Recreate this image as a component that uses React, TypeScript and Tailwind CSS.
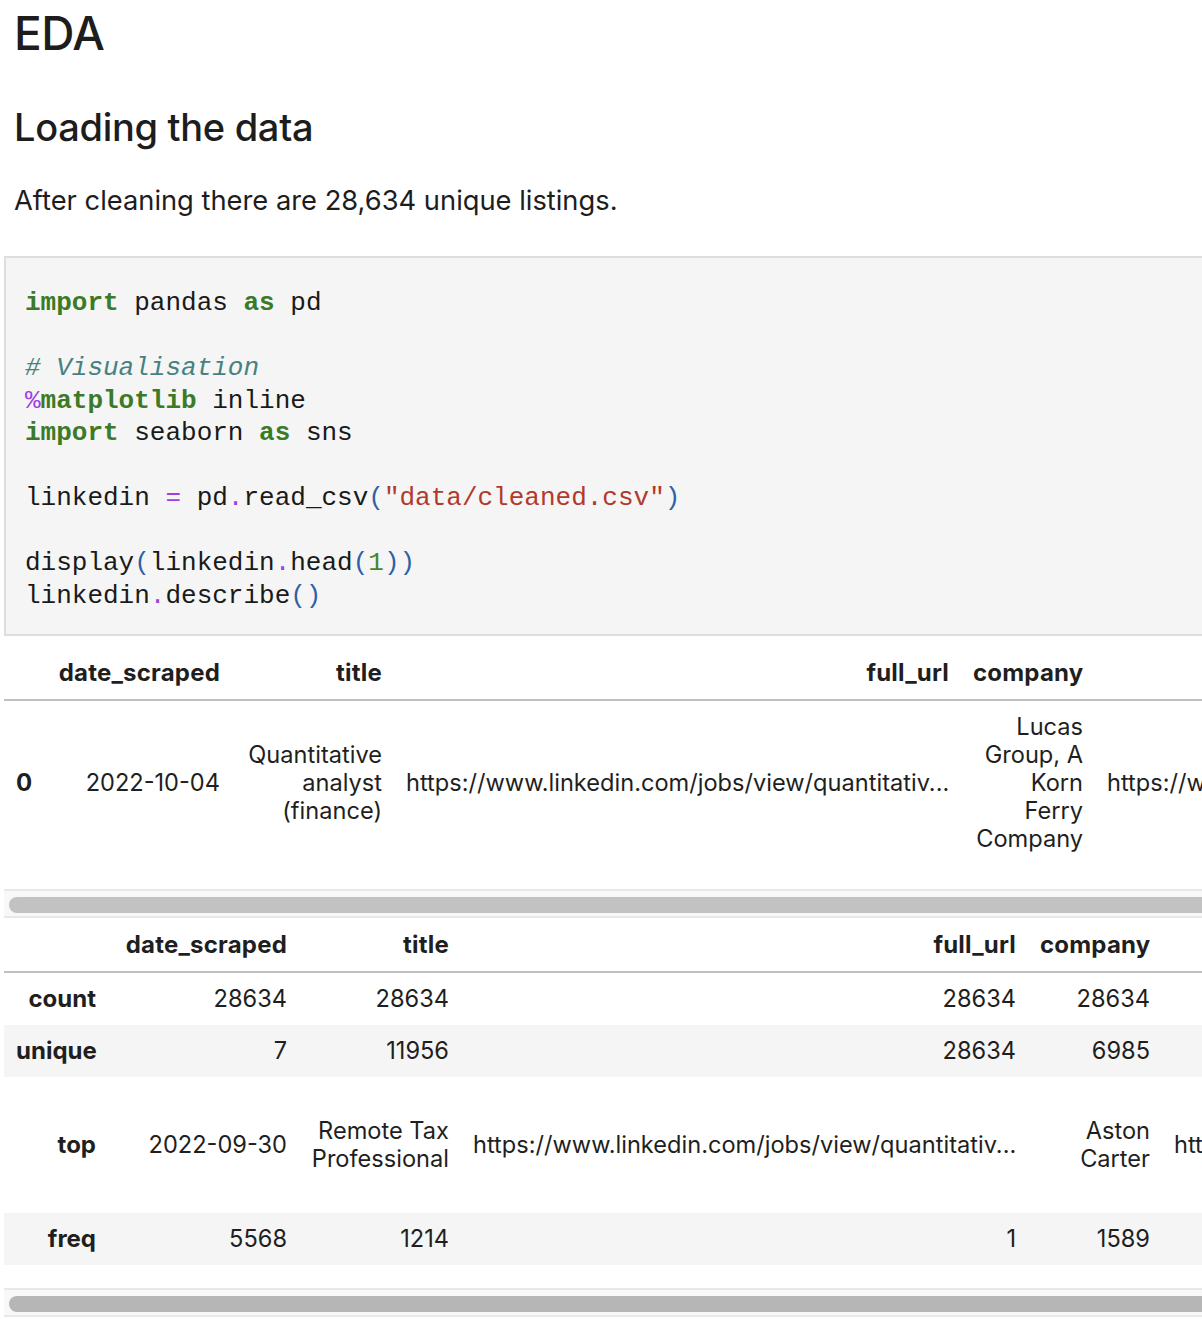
import React from "react";

const K = ({ children }: { children: React.ReactNode }) => (
  <span className="font-bold text-[#3b7a26]">{children}</span>
);
const O = ({ children }: { children: React.ReactNode }) => (
  <span className="text-[#a23ee6]">{children}</span>
);
const B = ({ children }: { children: React.ReactNode }) => (
  <span className="text-[#2f5fa6]">{children}</span>
);

function Scrollbar({ dark }: { dark?: boolean }) {
  return (
    <div className="ml-[4px] h-[29px] border-y-2 border-[#e8e8e8] bg-[#f8f8f8] pl-[5px] pt-[6px]">
      <div className={`h-[16px] rounded-l-full ${dark ? "bg-[#b6b6b6]" : "bg-[#c2c2c2]"}`} />
    </div>
  );
}

export default function App() {
  return (
    <div className="w-full overflow-hidden bg-white font-['Inter',sans-serif] text-[#1d1d1d]">
      <h1 className="ml-[14px] pt-[4px] text-[46px] font-medium leading-[58px] tracking-[-0.5px]">EDA</h1>
      <h2 className="ml-[14px] mt-[42px] text-[38px] font-medium leading-[46px] tracking-[-0.3px]">
        Loading the data
      </h2>
      <p className="ml-[14px] mt-[34px] text-[27.3px] leading-[33px]">
        After cleaning there are 28,634 unique listings.
      </p>

      <div className="ml-[4px] mt-[39px] border-y-2 border-l-2 border-[#dedede] bg-[#f5f5f5] pb-[22px] pl-[19px] pt-[29px]">
        <pre className="font-['Liberation_Mono',monospace] text-[26px] leading-[32.5px] text-[#1a1a1a]">
          <K>import</K> pandas <K>as</K> pd{"\n"}
          {"\n"}
          <span className="italic text-[#468181]"># Visualisation</span>
          {"\n"}
          <O>%</O>
          <K>matplotlib</K> inline{"\n"}
          <K>import</K> seaborn <K>as</K> sns{"\n"}
          {"\n"}
          linkedin <O>=</O> pd<O>.</O>read_csv<B>(</B>
          <span className="text-[#b23a2c]">"data/cleaned.csv"</span>
          <B>)</B>
          {"\n"}
          {"\n"}
          display<B>(</B>linkedin<O>.</O>head<B>(</B>
          <span className="text-[#43872f]">1</span>
          <B>))</B>
          {"\n"}
          linkedin<O>.</O>describe<B>()</B>
        </pre>
      </div>

      {/* head(1) output */}
      <div className="mt-[11px] overflow-hidden">
        <table className="ml-[4px] w-[1800px] table-fixed border-collapse text-right text-[23.6px] leading-[28px] text-[#1f1f1f]">
          <colgroup>
            <col className="w-[40px]" />
            <col className="w-[188px]" />
            <col className="w-[162px]" />
            <col className="w-[567px]" />
            <col className="w-[134px]" />
            <col className="w-[709px]" />
          </colgroup>
          <thead>
            <tr className="border-b-2 border-[#c0c0c0] text-[24px] tracking-[0.2px]">
              <th className="p-3"></th>
              <th className="p-3 font-bold">date_scraped</th>
              <th className="p-3 font-bold">title</th>
              <th className="p-3 font-bold">full_url</th>
              <th className="p-3 font-bold">company</th>
              <th className="p-3 font-bold">company_url</th>
            </tr>
          </thead>
          <tbody>
            <tr>
              <th className="p-3 text-left text-[24px] font-bold">0</th>
              <td className="p-3">2022-10-04</td>
              <td className="p-3">
                Quantitative
                <br />
                analyst
                <br />
                (finance)
              </td>
              <td className="p-3 whitespace-nowrap">https://www.linkedin.com/jobs/view/quantitativ...</td>
              <td className="p-3">
                Lucas
                <br />
                Group, A
                <br />
                Korn
                <br />
                Ferry
                <br />
                Company
              </td>
              <td className="p-3 text-left whitespace-nowrap">https://www.linkedin.com/company/lucas-group</td>
            </tr>
          </tbody>
        </table>
      </div>

      <div className="mt-[24px]">
        <Scrollbar />
      </div>

      {/* describe output */}
      <div className="mt-[1px] overflow-hidden">
        <table className="ml-[4px] w-[1800px] table-fixed border-collapse text-right text-[23.6px] leading-[28px] text-[#1f1f1f]">
          <colgroup>
            <col className="w-[104px]" />
            <col className="w-[191px]" />
            <col className="w-[162px]" />
            <col className="w-[567px]" />
            <col className="w-[134px]" />
            <col className="w-[642px]" />
          </colgroup>
          <thead>
            <tr className="border-b-2 border-[#c0c0c0] text-[24px] tracking-[0.2px]">
              <th className="p-3"></th>
              <th className="p-3 font-bold">date_scraped</th>
              <th className="p-3 font-bold">title</th>
              <th className="p-3 font-bold">full_url</th>
              <th className="p-3 font-bold">company</th>
              <th className="p-3 font-bold">company_url</th>
            </tr>
          </thead>
          <tbody>
            <tr className="h-[52px]">
              <th className="p-3 text-[24px] font-bold">count</th>
              <td className="p-3">28634</td>
              <td className="p-3">28634</td>
              <td className="p-3">28634</td>
              <td className="p-3">28634</td>
              <td className="p-3">28634</td>
            </tr>
            <tr className="h-[52px] bg-[#f5f5f5]">
              <th className="p-3 text-[24px] font-bold">unique</th>
              <td className="p-3">7</td>
              <td className="p-3">11956</td>
              <td className="p-3">28634</td>
              <td className="p-3">6985</td>
              <td className="p-3">6985</td>
            </tr>
            <tr className="h-[136px]">
              <th className="p-3 text-[24px] font-bold">top</th>
              <td className="p-3">2022-09-30</td>
              <td className="p-3">
                Remote Tax
                <br />
                Professional
              </td>
              <td className="p-3 whitespace-nowrap">https://www.linkedin.com/jobs/view/quantitativ...</td>
              <td className="p-3">
                Aston
                <br />
                Carter
              </td>
              <td className="p-3 text-left whitespace-nowrap">https://www.linkedin.com/company/aston-carter</td>
            </tr>
            <tr className="h-[52px] bg-[#f5f5f5]">
              <th className="p-3 text-[24px] font-bold">freq</th>
              <td className="p-3">5568</td>
              <td className="p-3">1214</td>
              <td className="p-3">1</td>
              <td className="p-3">1589</td>
              <td className="p-3">1589</td>
            </tr>
          </tbody>
        </table>
      </div>

      <div className="mt-[23px] pb-[4px]">
        <Scrollbar dark />
      </div>
    </div>
  );
}
